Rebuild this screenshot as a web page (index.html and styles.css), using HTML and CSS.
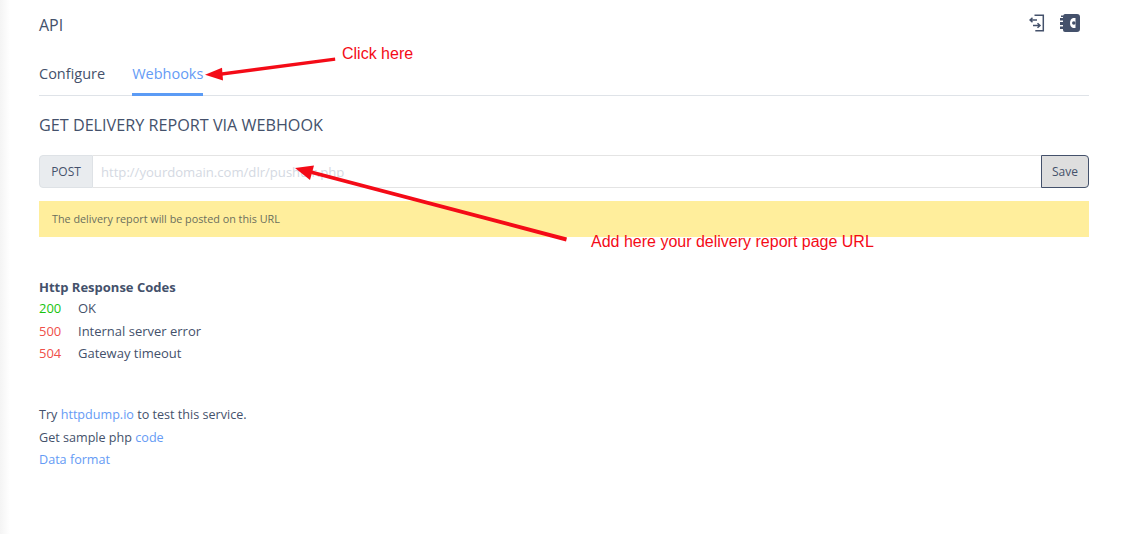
FILE: index.html
```html
<!DOCTYPE html>
<html lang="en">

<head>
  <meta charset="utf-8" />
  <title>API</title>
  <link rel="stylesheet" href="styles.css">
</head>

<body>
  <div class="page">
    <div class="head">
      <span class="title">API</span>
      <div class="head-icons">
        <svg width="16" height="18" viewBox="0 0 16 18" fill="none" stroke="#44516b" stroke-width="1.5">
          <path d="M5.500 1.200h8.800v15.600h-8M1 6h7M3.500 3.700 1 6l2.500 2.300M4 11.500h7M8.500 9.200l2.500 2.300-2.500 2.300" />
        </svg>
        <svg width="20" height="18" viewBox="0 0 20 18">
          <path fill="#44516b" d="M5 0h12q3 0 3 3v12q0 3-3 3H5q-2 0-2-2v-1H0v-2.500h3v-1.500H0V8h3V6.500H0V4h3V3H1V1.500h2.200Q3.500 0 5 0z" />
          <path fill="#fff" d="M13 4q-3 1-3 5t3 5h2.500V4z" />
          <circle cx="13.800" cy="9" r="1.800" fill="#44516b" />
        </svg>
      </div>
    </div>

    <div class="tabs">
      <a class="tab">Configure</a>
      <a class="tab active">Webhooks</a>
    </div>

    <h2 class="section-title">GET DELIVERY REPORT VIA WEBHOOK</h2>

    <div class="url-group">
      <span class="url-method">POST</span>
      <input class="url-input" type="text" placeholder="http://yourdomain.com/dlr/pushdlr.php">
      <button class="url-save">Save</button>
    </div>

    <div class="notice">The delivery report will be posted on this URL</div>

    <div class="codes">
      <div class="codes-title">Http Response Codes</div>
      <div class="code-row"><span class="code ok">200</span>OK</div>
      <div class="code-row"><span class="code err">500</span>Internal server error</div>
      <div class="code-row"><span class="code err">504</span>Gateway timeout</div>
    </div>

    <div class="links">
      <div>Try <a>httpdump.io</a> to test this service.</div>
      <div>Get sample php <a>code</a></div>
      <div><a>Data format</a></div>
    </div>
  </div>

  <!-- annotations drawn over the screenshot -->
  <svg class="arrows" width="1127" height="534" viewBox="0 0 1127 534">
    <g fill="#f40b17" stroke="none">
      <path d="M335 57.500 222 72.300l-.5 3.400 113.800-14.900z" />
      <path d="M205 74.800 222 67.800l1 12.700z" />
      <path d="M567 237.600 312 170.500l-1 3.600 255 67.300z" />
      <path d="M295 168l19-2.500-4 14.500z" />
    </g>
  </svg>
  <span class="note note-click">Click here</span>
  <span class="note note-url">Add here your delivery report page URL</span>
</body>

</html>
```

FILE: styles.css
```css
html,
body {
  margin: 0;
  padding: 0;
  height: 100%;
  background-color: #fff;
  color: #44516b;
  font-family: "Open Sans", sans-serif;
  font-size: 13px;
  overflow: hidden;
}

body {
  background-image: linear-gradient(to right, #f4f4f4, #fff 10px);
}

a {
  color: #659bf5;
}

.page {
  padding: 0 38px 0 39px;
}

.head {
  display: flex;
  justify-content: space-between;
  height: 52px;
  padding-top: 14px;
  box-sizing: border-box;
}

.title {
  font-size: 16px;
  line-height: 22px;
}

.head-icons {
  display: flex;
  gap: 15px;
  padding: 0 9px 0 0;
  height: 18px;
}

.tabs {
  display: flex;
  gap: 27px;
  height: 44px;
  box-sizing: border-box;
  border-bottom: 1px solid #dfe3e8;
}

.tab {
  color: #44516b;
  font-size: 14.500px;
  line-height: 20px;
  padding-top: 12px;
  height: 44px;
  box-sizing: border-box;
}

.tab.active {
  color: #659bf5;
  border-bottom: 3px solid #5b9bf5;
}

.section-title {
  margin: 19px 0 0;
  font-size: 16.200px;
  font-weight: 400;
  line-height: 20px;
}

.url-group {
  display: flex;
  height: 33px;
  margin-top: 20px;
}

.url-method {
  width: 54px;
  box-sizing: border-box;
  text-align: center;
  line-height: 31px;
  font-size: 12px;
  background-color: #e9ecef;
  border: 1px solid #dee2e6;
  border-radius: 4px 0 0 4px;
}

.url-input {
  flex: 1;
  min-width: 0;
  padding: 0 8px;
  font-family: inherit;
  font-size: 13.100px;
  border: 1px solid #e4e4e4;
  border-left: 0;
  border-right: 0;
  outline: none;
}

.url-input::placeholder {
  color: #d4d9e2;
}

.url-save {
  width: 48px;
  padding: 0;
  font-family: inherit;
  font-size: 12px;
  color: #44516b;
  background-color: #dedede;
  border: 1px solid #44516b;
  border-radius: 0 4px 4px 0;
}

.notice {
  margin-top: 13px;
  height: 36px;
  padding-left: 13px;
  line-height: 36px;
  font-size: 10.800px;
  color: #6b6f5c;
  background-color: #ffee9c;
}

.codes {
  margin-top: 40px;
}

.codes-title {
  font-weight: 700;
  line-height: 20px;
}

.code-row {
  line-height: 22.500px;
}

.code {
  display: inline-block;
  width: 39px;
}

.ok {
  color: #19c40f;
}

.err {
  color: #f0504a;
}

.links {
  margin-top: 39.700px;
  font-size: 12.600px;
  line-height: 22.400px;
}

.arrows {
  position: absolute;
  top: 0;
  left: 0;
}

.note {
  position: absolute;
  color: #f40b17;
  font-family: "Liberation Sans", sans-serif;
  font-size: 16px;
  line-height: 18px;
  white-space: nowrap;
}

.note-click {
  top: 45px;
  left: 342px;
}

.note-url {
  top: 233px;
  left: 591px;
}
```
